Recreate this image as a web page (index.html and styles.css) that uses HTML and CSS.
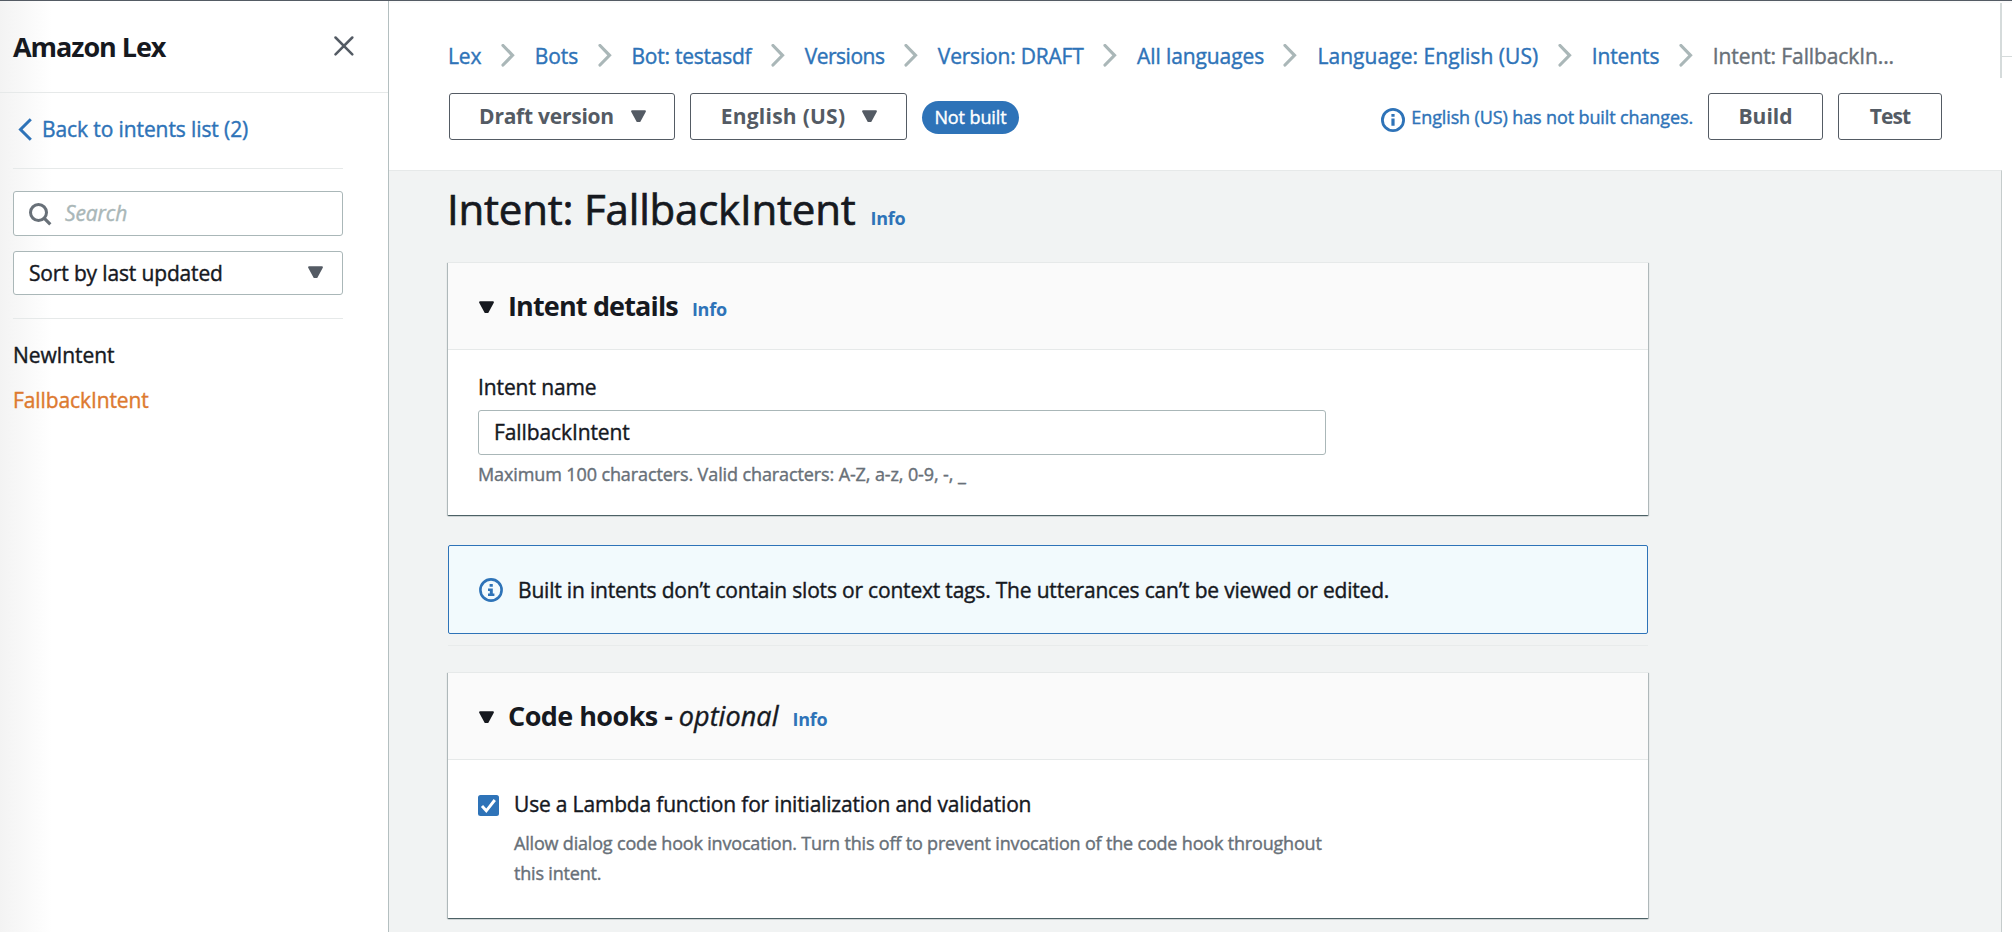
FILE: index.html
```html
<!DOCTYPE html>
<html lang="en">
<head>
<meta charset="utf-8">
<title>Amazon Lex</title>
<link rel="stylesheet" href="styles.css">
</head>
<body>
<svg class="defs" width="0" height="0">
  <symbol id="chev" viewBox="0 0 14 23"><path d="M2 1.5 11.5 11.3 2 21" fill="none" stroke="#aab7b8" stroke-width="3.2" stroke-linecap="round"/></symbol>
  <symbol id="tri" viewBox="0 0 15 13"><path d="M1 1.2h13L8.6 11.2H6.4z" fill="currentColor" stroke="currentColor" stroke-width="1.8" stroke-linejoin="round"/></symbol>
</svg>
<div class="app">
  <aside class="side">
    <header class="side-head">
      <h2>Amazon Lex</h2>
      <svg class="close" width="20" height="20" viewBox="0 0 20 20"><path d="M1.5 1.5 18.3 18.3M18.3 1.5 1.5 18.3" fill="none" stroke="#545b64" stroke-width="2.5" stroke-linecap="round"/></svg>
    </header>
    <div class="side-body">
      <a class="back"><svg width="14" height="23" viewBox="0 0 14 23"><path d="M12.8 1.2 2.5 11.5 12.8 21.8" fill="none" stroke="#2e73b8" stroke-width="3"/></svg><span>Back to intents list (2)</span></a>
      <div class="filters">
        <div class="field search"><svg width="23" height="23" viewBox="0 0 23 23"><circle cx="9.5" cy="9.5" r="8" fill="none" stroke="#687078" stroke-width="3"/><path d="m14.8 14.8 6.5 6.5" stroke="#687078" stroke-width="3.2"/></svg><em>Search</em></div>
        <div class="field select"><span>Sort by last updated</span><svg width="15" height="13"><use href="#tri"/></svg></div>
      </div>
      <ul class="intents"><li>NewIntent</li><li class="active">FallbackIntent</li></ul>
    </div>
  </aside>
  <main class="main">
    <div class="crumb-row">
      <nav class="crumbs">
        <a>Lex</a><svg><use href="#chev"/></svg>
        <a>Bots</a><svg><use href="#chev"/></svg>
        <a class="t2">Bot: testasdf</a><svg><use href="#chev"/></svg>
        <a class="t4">Versions</a><svg><use href="#chev"/></svg>
        <a class="t3">Version: DRAFT</a><svg><use href="#chev"/></svg>
        <a>All languages</a><svg><use href="#chev"/></svg>
        <a class="t0">Language: English (US)</a><svg><use href="#chev"/></svg>
        <a>Intents</a><svg><use href="#chev"/></svg>
        <span>Intent: FallbackIn...</span>
      </nav>
      <div class="edge"></div>
    </div>
    <div class="toolbar">
      <button class="btn draft">Draft version<svg width="15" height="13"><use href="#tri"/></svg></button>
      <button class="btn lang"><span>English (US)</span><svg width="15" height="13"><use href="#tri"/></svg></button>
      <span class="badge">Not built</span>
      <div class="status"><svg width="24" height="24" viewBox="0 0 24 24"><circle cx="12" cy="12" r="10.6" fill="none" stroke="#2e73b8" stroke-width="2.8"/><path d="M10.4 6h3.2v2.8h-3.2zM10.4 10.4h3.2v7.4h-3.2z" fill="#2e73b8"/></svg><span>English (US) has not built changes.</span></div>
      <button class="btn build">Build</button>
      <button class="btn test">Test</button>
    </div>
    <div class="content-row">
      <div class="content">
        <div class="title"><h1>Intent: FallbackIntent</h1><a class="info">Info</a></div>
        <section class="card">
          <header class="card-head"><svg width="15" height="13"><use href="#tri"/></svg><h2 class="h-details">Intent details</h2><a class="info">Info</a></header>
          <div class="form">
            <label>Intent name</label>
            <div class="input">FallbackIntent</div>
            <p class="hint">Maximum 100 characters. Valid characters: A-Z, a-z, 0-9, -, _</p>
          </div>
        </section>
        <div class="alert"><svg width="24" height="24" viewBox="0 0 24 24"><circle cx="12" cy="12" r="10.6" fill="none" stroke="#2e73b8" stroke-width="2.6"/><path d="M10.6 6h3.2v2.8h-3.2zM9 10.4h4.8v5H15.4v2.6H9v-2.6h1.8v-2.4H9z" fill="#2e73b8"/></svg><span>Built in intents don’t contain slots or context tags. The utterances can’t be viewed or edited.</span></div>
        <div class="rule"></div>
        <section class="card hooks">
          <header class="card-head"><svg width="15" height="13"><use href="#tri"/></svg><h2 class="h-hooks">Code hooks - <em>optional</em></h2><a class="info">Info</a></header>
          <div class="option">
            <svg width="21" height="21" viewBox="0 0 21 21"><rect width="21" height="21" rx="2.5" fill="#2e73b8"/><path d="m4 11 4.3 4.8L16.8 5" fill="none" stroke="#fff" stroke-width="2.9"/></svg>
            <div><p class="opt-label">Use a Lambda function for initialization and validation</p><p class="opt-desc">Allow dialog code hook invocation. Turn this off to prevent invocation of the code hook throughout<br>this intent.</p></div>
          </div>
        </section>
      </div>
    </div>
  </main>
</div>
</body>
</html>
```
FILE: styles.css
```css
* { box-sizing: border-box; margin: 0; padding: 0; }
body {
  font: 21px/30px "Open Sans", "Noto Sans", sans-serif;
  letter-spacing: -.1px;
  color: #16191f;
  background: #fff;
  overflow: hidden;
  -webkit-text-stroke: .4px currentColor;
}
.defs { position: absolute; }
svg { flex: none; display: block; }
ul { list-style: none; }
.app {
  display: grid;
  grid-template-columns: 389px 1fr;
  height: 932px;
  border-top: 1px solid #545b64;
}

/* Navigation panel */
.side {
  border-right: 1px solid #b4bfc0;
  background: linear-gradient(90deg, #f3f3f3, #fff 52px);
}
.side-head {
  display: flex;
  align-items: center;
  justify-content: space-between;
  height: 92px;
  padding: 0 34px 0 13px;
  border-bottom: 1px solid #e6e9e9;
}
.side-head h2 { font-size: 27px; letter-spacing: -1.05px; -webkit-text-stroke: 0; }
.close { margin-bottom: 1px; }
.side-body { padding: 0 45px 0 13px; }
.back {
  display: flex;
  align-items: center;
  gap: 10px;
  height: 76px;
  padding: 0 0 3px 5px;
  color: #2e73b8;
  border-bottom: 1px solid #e6e9e9;
}
.filters {
  display: grid;
  gap: 15px;
  padding: 22px 0 23px;
  border-bottom: 1px solid #e6e9e9;
}
.field {
  display: flex;
  align-items: center;
  height: 45px;
  border: 1px solid #aab7b8;
  border-radius: 3px;
  background: #fff;
}
.search { padding-left: 15px; gap: 13px; color: #aab7b8; }
.search em { padding-bottom: 1px; }
.search svg { margin-top: 1px; }
.select { height: 44px; padding: 0 19px 1px 15px; justify-content: space-between; letter-spacing: -.15px; }
.select svg { color: #545b64; }
.intents { padding-top: 14px; }
.intents li { height: 45px; line-height: 45px; }
.intents .active { color: #dd7a30; }

/* Breadcrumbs and toolbar */
.main { display: flex; flex-direction: column; min-width: 0; }
.crumb-row {
  display: grid;
  grid-template-columns: 1613px 1fr;
  height: 77px;
  border-top: 2px solid #fafafa;
}
.crumbs {
  display: flex;
  align-items: center;
  padding: 30px 0 0 59px;
  border-right: 2px solid #d5dbdb;
  color: #2e73b8;
  white-space: nowrap;
}
.crumbs svg { width: 14px; height: 23px; margin: 0 20px 0 19.4px; }
.crumbs span { color: #687078; }
.t0 { letter-spacing: .05px; }
.t2 { letter-spacing: -.25px; }
.t3 { letter-spacing: -.2px; }
.t4 { letter-spacing: -.5px; }
.edge { height: 54px; border-bottom: 1px solid #d5dbdb; }
.toolbar {
  display: flex;
  align-items: center;
  height: 92px;
  padding: 0 70px 15px 60px;
}
.btn {
  height: 47px;
  font: 700 21px/30px "Open Sans", "Noto Sans", sans-serif;
  color: #545b64;
  background: #fff;
  border: 1.5px solid #545b64;
  border-radius: 3px;
  display: flex;
  align-items: center;
  justify-content: center;
  padding-bottom: 1px;
  -webkit-text-stroke: 0;
}
.draft { width: 226px; gap: 17px; padding-left: 1px; letter-spacing: -.25px; }
.lang { width: 217px; margin: 0 15px; gap: 17px; padding-left: 1px; letter-spacing: .25px; }
.badge {
  width: 97px;
  height: 33px;
  margin-top: 2px;
  border-radius: 17px;
  background: #2e73b8;
  color: #fff;
  font-size: 18px;
  line-height: 32px;
  text-align: center;
}
.status {
  display: flex;
  align-items: center;
  gap: 6px;
  margin: 1px 15px 0 auto;
  color: #2e73b8;
  font-size: 18px;
  letter-spacing: -.12px;
}
.status svg { margin-top: 6px; }
.build { width: 115px; }
.test { width: 104px; margin-left: 15px; letter-spacing: -.9px; }

/* Page content */
.content-row { flex: 1; padding-right: 10px; }
.content {
  height: 100%;
  padding-left: 59px;
  background: #f1f3f3;
  border-top: 1px solid #e6e9e9;
  border-right: 1px solid #c5cccc;
}
.title {
  display: flex;
  align-items: baseline;
  height: 91px;
  line-height: 76px;
}
h1 { font-size: 42px; font-weight: 400; letter-spacing: -.2px; margin: 0 15px 0 -1px; -webkit-text-stroke: .7px currentColor; }
.info { color: #2e73b8; font-size: 18px; font-weight: 700; letter-spacing: -.25px; -webkit-text-stroke: 0; }
.card {
  width: 1200px;
  height: 253px;
  background: #fff;
  box-shadow: 0 1px 1px 0 rgba(0, 28, 36, .5), 1px 1px 1px 0 rgba(0, 28, 36, .2), -1px 1px 1px 0 rgba(0, 28, 36, .2);
}
.card-head {
  display: flex;
  align-items: baseline;
  height: 88px;
  padding: 28px 0 0 32px;
  background: #fafafa;
  border-top: 1px solid #e6e9e9;
  border-bottom: 1px solid #e6e9e9;
}
.card-head svg { align-self: flex-start; margin: 10px 0 0 -1px; }
.card-head h2 { font-size: 27px; margin: 0 14px; -webkit-text-stroke: 0; }
.h-details { letter-spacing: -.85px; }
.h-hooks { letter-spacing: -.56px; }
.h-hooks em { font-weight: 400; letter-spacing: .05px; -webkit-text-stroke: .4px currentColor; }
.form { padding: 22px 0 0 30px; }
.input {
  width: 848px;
  height: 45px;
  margin-top: 8px;
  padding-left: 15px;
  line-height: 42px;
  border: 1px solid #aab7b8;
  border-radius: 3px;
}
.hint { margin-top: 4px; font-size: 18px; letter-spacing: -.11px; color: #687078; }
.alert {
  display: flex;
  align-items: center;
  gap: 15px;
  width: 1200px;
  height: 89px;
  margin-top: 30px;
  padding-left: 30px;
  background: #f2fafd;
  border: 1px solid #2e73b8;
  border-radius: 2px;
  letter-spacing: -.19px;
}
.rule { width: 1200px; height: 1px; margin-top: 11px; background: #e8ebeb; }
.hooks { height: 246px; margin-top: 26px; }
.option { display: flex; gap: 15px; padding: 29px 0 0 30px; }
.option svg { margin-top: 6px; }
.opt-label { letter-spacing: -.18px; }
.opt-desc { margin-top: 9px; font-size: 18px; letter-spacing: -.18px; color: #687078; }
```
